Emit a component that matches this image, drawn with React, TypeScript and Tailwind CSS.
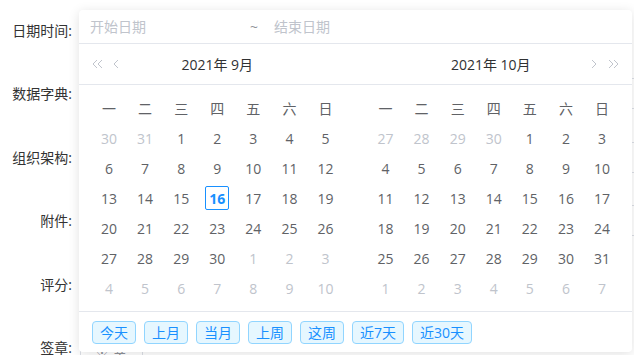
import React from "react";

type Cell = { d: number; m?: boolean; t?: boolean };

const mk = (arr: (number | string)[]): Cell[] =>
  arr.map((v) => {
    if (typeof v === "string") {
      if (v.startsWith("m")) return { d: parseInt(v.slice(1)), m: true };
      if (v.startsWith("t")) return { d: parseInt(v.slice(1)), t: true };
    }
    return { d: v as number };
  });

const sep: Cell[] = mk([
  "m30", "m31", 1, 2, 3, 4, 5,
  6, 7, 8, 9, 10, 11, 12,
  13, 14, 15, "t16", 17, 18, 19,
  20, 21, 22, 23, 24, 25, 26,
  27, 28, 29, 30, "m1", "m2", "m3",
  "m4", "m5", "m6", "m7", "m8", "m9", "m10",
]);

const oct: Cell[] = mk([
  "m27", "m28", "m29", "m30", 1, 2, 3,
  4, 5, 6, 7, 8, 9, 10,
  11, 12, 13, 14, 15, 16, 17,
  18, 19, 20, 21, 22, 23, 24,
  25, 26, 27, 28, 29, 30, 31,
  "m1", "m2", "m3", "m4", "m5", "m6", "m7",
]);

const weeks = ["一", "二", "三", "四", "五", "六", "日"];

function DoubleLeft() {
  return (
    <svg width="11" height="10" viewBox="0 0 11 10" fill="none" stroke="#c0c4cc" strokeWidth="1">
      <polyline points="5,1 1,5 5,9" />
      <polyline points="10,1 6,5 10,9" />
    </svg>
  );
}
function SingleLeft() {
  return (
    <svg width="6" height="10" viewBox="0 0 6 10" fill="none" stroke="#c0c4cc" strokeWidth="1">
      <polyline points="5,1 1,5 5,9" />
    </svg>
  );
}
function SingleRight() {
  return (
    <svg width="6" height="10" viewBox="0 0 6 10" fill="none" stroke="#c0c4cc" strokeWidth="1">
      <polyline points="1,1 5,5 1,9" />
    </svg>
  );
}
function DoubleRight() {
  return (
    <svg width="11" height="10" viewBox="0 0 11 10" fill="none" stroke="#c0c4cc" strokeWidth="1">
      <polyline points="1,1 5,5 1,9" />
      <polyline points="6,1 10,5 6,9" />
    </svg>
  );
}

function Grid({ cells }: { cells: Cell[] }) {
  return (
    <div className="grid grid-cols-7">
      {weeks.map((w) => (
        <div key={w} className="h-[30px] flex items-center justify-center text-[#606266]">
          {w}
        </div>
      ))}
      {cells.map((c, i) => (
        <div key={i} className="h-[30px] flex items-center justify-center">
          {c.t ? (
            <span className="w-[24px] h-[24px] flex items-center justify-center border border-[#1890ff] rounded-[2px] text-[#1890ff] font-bold">
              {c.d}
            </span>
          ) : (
            <span className={c.m ? "text-[#c0c4cc]" : "text-[#606266]"}>{c.d}</span>
          )}
        </div>
      ))}
    </div>
  );
}

const btns = ["今天", "上月", "当月", "上周", "这周", "近7天", "近30天"];

export default function App() {
  const labels = ["日期时间:", "数据字典:", "组织架构:", "附件:", "评分:", "签章:"];
  return (
    <div
      className="relative w-[634px] h-[355px] overflow-hidden bg-white text-[14px]"
      style={{ fontFamily: "'Open Sans', 'Noto Sans CJK SC', sans-serif" }}
    >
      {/* underlying form */}
      <div className="flex flex-col pt-[13px] gap-[29.6px]">
        {labels.map((l, i) => (
          <div key={l} className="flex items-center h-[34px]">
            <div className="w-[73px] shrink-0 text-right text-[#333] pr-[1px]">{l}</div>
            <div className="ml-[7px] flex-1 -mr-[20px]">
              {i >= 1 && i <= 3 ? (
                <div className="h-[31px] border border-[#dcdfe6] rounded-[4px]" />
              ) : null}
              {i === 5 ? (
                <div className="mt-[26px] w-[63px] h-[40px] border border-[#dcdfe6] rounded-[2px] pl-[14px] pt-[4px] text-[#909399]">
                  ※ 关
                </div>
              ) : null}
            </div>
          </div>
        ))}
      </div>

      {/* popup */}
      <div className="absolute left-[79px] top-[10px] w-[553px] h-[342px] bg-white rounded-[4px] shadow-[0_2px_12px_rgba(0,0,0,0.12)] flex flex-col">
        <div className="h-[34px] shrink-0 border-b border-[#e4e7ed] flex items-center pl-[11px] text-[#c0c4cc]">
          <span className="w-[160px]">开始日期</span>
          <span className="w-[24px] text-[#909399]">~</span>
          <span>结束日期</span>
        </div>
        <div className="h-[41px] shrink-0 border-b border-[#e4e7ed] flex">
          <div className="w-1/2 relative flex items-center justify-center text-[#303133]">
            <div className="absolute left-[13px] top-0 h-full flex items-center gap-[10px]">
              <DoubleLeft />
              <SingleLeft />
            </div>
            <span>2021年 9月</span>
          </div>
          <div className="w-1/2 relative flex items-center justify-center text-[#303133]">
            <span className="-ml-[6px]">2021年 10月</span>
            <div className="absolute right-[13px] top-0 h-full flex items-center gap-[11px]">
              <SingleRight />
              <DoubleRight />
            </div>
          </div>
        </div>
        <div className="flex pt-[8px] pb-[8px] border-b border-[#e4e7ed]">
          <div className="w-1/2 px-[12px]">
            <Grid cells={sep} />
          </div>
          <div className="w-1/2 px-[12px]">
            <Grid cells={oct} />
          </div>
        </div>
        <div className="flex-1 flex items-center gap-[8px] pl-[13px]">
          {btns.map((b) => (
            <div
              key={b}
              className="h-[23px] px-[7px] flex items-center rounded-[4px] border border-[#91d5ff] bg-[#e6f7ff] text-[#1890ff]"
            >
              {b}
            </div>
          ))}
        </div>
      </div>
    </div>
  );
}
